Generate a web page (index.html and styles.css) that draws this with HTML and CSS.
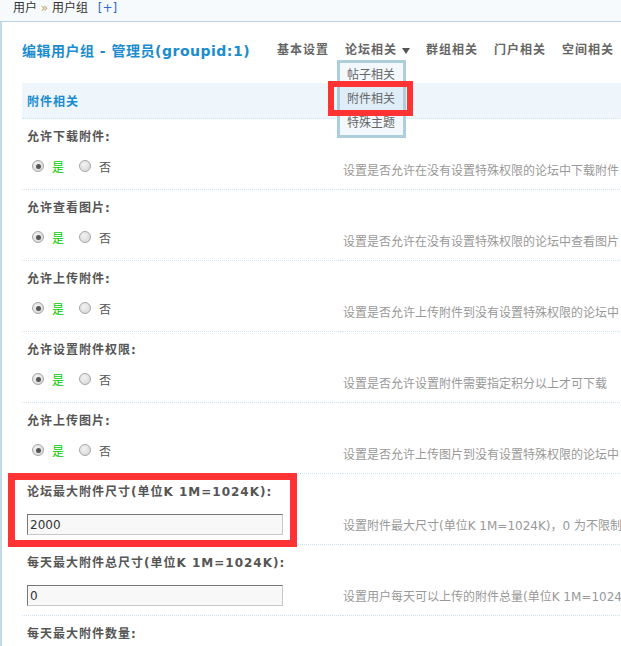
FILE: index.html
```html
<!DOCTYPE html>
<html lang="zh-CN">

<head>
    <meta charset="UTF-8">
    <title>编辑用户组</title>
    <link rel="stylesheet" href="styles.css">
</head>

<body>
    <div class="crumb">用户 <em>&raquo;</em> 用户组 <a href="#">[+]</a></div>

    <div class="main">
        <!-- title + tabs -->
        <div class="head">
            <h3>编辑用户组 - 管理员(groupid:1)</h3>
            <ul class="tabs">
                <li>基本设置</li>
                <li class="has-drop">论坛相关<span class="caret"></span>
                    <div class="dropmenu">
                        <a href="#">帖子相关</a>
                        <a href="#" class="current">附件相关</a>
                        <a href="#">特殊主题</a>
                    </div>
                </li>
                <li>群组相关</li>
                <li>门户相关</li>
                <li>空间相关</li>
            </ul>
        </div>

        <table class="tb">
            <tr>
                <th colspan="2" class="partition">附件相关</th>
            </tr>

            <tr><td colspan="2" class="td27">允许下载附件:</td></tr>
            <tr class="opt">
                <td class="rowform">
                    <div class="opts">
                        <label class="checked"><span class="radio"></span><span class="yes">是</span></label>
                        <label><span class="radio"></span>否</label>
                    </div>
                </td>
                <td class="tips2">设置是否允许在没有设置特殊权限的论坛中下载附件</td>
            </tr>

            <tr><td colspan="2" class="td27">允许查看图片:</td></tr>
            <tr class="opt">
                <td class="rowform">
                    <div class="opts">
                        <label class="checked"><span class="radio"></span><span class="yes">是</span></label>
                        <label><span class="radio"></span>否</label>
                    </div>
                </td>
                <td class="tips2">设置是否允许在没有设置特殊权限的论坛中查看图片</td>
            </tr>

            <tr><td colspan="2" class="td27">允许上传附件:</td></tr>
            <tr class="opt">
                <td class="rowform">
                    <div class="opts">
                        <label class="checked"><span class="radio"></span><span class="yes">是</span></label>
                        <label><span class="radio"></span>否</label>
                    </div>
                </td>
                <td class="tips2">设置是否允许上传附件到没有设置特殊权限的论坛中</td>
            </tr>

            <tr><td colspan="2" class="td27">允许设置附件权限:</td></tr>
            <tr class="opt">
                <td class="rowform">
                    <div class="opts">
                        <label class="checked"><span class="radio"></span><span class="yes">是</span></label>
                        <label><span class="radio"></span>否</label>
                    </div>
                </td>
                <td class="tips2">设置是否允许设置附件需要指定积分以上才可下载</td>
            </tr>

            <tr><td colspan="2" class="td27">允许上传图片:</td></tr>
            <tr class="opt">
                <td class="rowform">
                    <div class="opts">
                        <label class="checked"><span class="radio"></span><span class="yes">是</span></label>
                        <label><span class="radio"></span>否</label>
                    </div>
                </td>
                <td class="tips2">设置是否允许上传图片到没有设置特殊权限的论坛中</td>
            </tr>

            <tr><td colspan="2" class="td27">论坛最大附件尺寸(单位K 1M=1024K):</td></tr>
            <tr class="opt">
                <td class="rowform">
                    <div class="opts"><input type="text" class="txt" value="2000"></div>
                </td>
                <td class="tips2">设置附件最大尺寸(单位K 1M=1024K)，0 为不限制</td>
            </tr>

            <tr><td colspan="2" class="td27">每天最大附件总尺寸(单位K 1M=1024K):</td></tr>
            <tr class="opt">
                <td class="rowform">
                    <div class="opts"><input type="text" class="txt" value="0"></div>
                </td>
                <td class="tips2">设置用户每天可以上传的附件总量(单位K 1M=1024K)，0 为不限制</td>
            </tr>

            <tr><td colspan="2" class="td27">每天最大附件数量:</td></tr>
            <tr class="opt">
                <td class="rowform">
                    <div class="opts"><input type="text" class="txt" value="0"></div>
                </td>
                <td class="tips2">设置用户每天可以上传的附件数量，0 为不限制</td>
            </tr>
        </table>
    </div>

    <!-- red marks drawn over the page -->
    <div class="mark mark-menu"></div>
    <div class="mark mark-row"></div>
</body>

</html>
```

FILE: styles.css
```css
body {
    margin: 0;
    position: relative;
    overflow: hidden;
    background: #fff;
    font-family: "DejaVu Sans", "Noto Sans CJK SC", sans-serif;
    font-size: 12px;
    color: #555;
}

a {
    text-decoration: none;
}

.crumb {
    height: 21px;
    line-height: 16px;
    padding-left: 13px;
    background: #f6fafd;
    border-bottom: 1px solid #bcd3df;
    color: #333;
    white-space: nowrap;
}

.crumb em {
    font-style: normal;
    color: #c9a06a;
}

.crumb a {
    color: #3366cc;
    margin-left: 6px;
}

.main {
    border-left: 2px solid #c4dae6;
    padding-left: 20px;
    min-height: 700px;
}

.head {
    display: flex;
    align-items: center;
    height: 56px;
    margin-bottom: 5px;
    white-space: nowrap;
}

.head h3 {
    flex-shrink: 0;
    margin: 0;
    width: 247px;
    font-size: 14px;
    letter-spacing: 0.5px;
    color: #1b8ccf;
}

.tabs {
    display: flex;
    flex-shrink: 0;
    margin: 0;
    padding: 0;
    list-style: none;
}

.tabs li {
    position: relative;
    padding: 0 8px;
    line-height: 20px;
    font-weight: bold;
    letter-spacing: 1px;
    color: #666;
}

.caret {
    display: inline-block;
    vertical-align: middle;
    margin-left: 5px;
    border-left: 4px solid transparent;
    border-right: 4px solid transparent;
    border-top: 6px solid #555;
}

.dropmenu {
    position: absolute;
    top: 100%;
    left: 0;
    z-index: 2;
    width: 63px;
    border: 3px solid #afcedb;
    background: #f2f8fc;
}

.dropmenu a {
    display: block;
    padding-left: 7px;
    line-height: 24px;
    font-weight: normal;
    letter-spacing: 0;
    color: #666;
}

.dropmenu a.current {
    background: #deedf8;
}

.tb {
    width: 900px;
    border-collapse: separate;
    border-spacing: 0;
    white-space: nowrap;
}

.tb td,
.tb th {
    padding: 0;
    text-align: left;
    vertical-align: top;
}

.partition {
    height: 35px;
    padding: 0 5px !important;
    vertical-align: middle !important;
    background: #eef5fb;
    border-bottom: 1px dotted #cfe2ef;
    color: #1b8ccf;
    letter-spacing: 1px;
}

.td27 {
    padding: 10px 5px !important;
    line-height: 16px;
    font-weight: bold;
    letter-spacing: 1px;
    color: #555;
}

.opt td {
    border-bottom: 1px dotted #cfe2ef;
}

.rowform {
    width: 316px;
    padding: 4px 0 0 5px !important;
}

.opts {
    display: flex;
    align-items: flex-start;
    height: 30px;
}

.opts label {
    display: flex;
    align-items: center;
    height: 14px;
    color: #555;
}

.opts label + label {
    margin-left: 10px;
}

.radio {
    position: relative;
    box-sizing: border-box;
    width: 12px;
    height: 12px;
    margin: 0 8px 0 5px;
    border: 1px solid #a6a6a6;
    border-radius: 50%;
    background: radial-gradient(circle at 40% 35%, #f2f2f2, #d4d4d4);
}

.checked .radio::after {
    content: "";
    position: absolute;
    left: 2.5px;
    top: 2.5px;
    width: 5px;
    height: 5px;
    border-radius: 50%;
    background: #555;
}

.yes {
    color: #00cc00;
}

.txt {
    box-sizing: border-box;
    width: 256px;
    height: 21px;
    margin: 0;
    padding: 0 2px;
    border: 1px solid #c8c8c8;
    border-top-color: #777;
    border-left-color: #777;
    background: #f8f8f8;
    font-family: "DejaVu Sans", sans-serif;
    font-size: 12px;
    color: #333;
}

.tips2 {
    padding-top: 8px !important;
    line-height: 16px;
    color: #999;
}

.mark {
    position: absolute;
    z-index: 5;
    border-style: solid;
    border-color: #ff3333;
}

.mark-menu {
    left: 328px;
    top: 81px;
    width: 73px;
    height: 23px;
    border-width: 6px;
}

.mark-row {
    left: 8px;
    top: 473px;
    width: 275px;
    height: 60px;
    border-width: 7px;
}
```
